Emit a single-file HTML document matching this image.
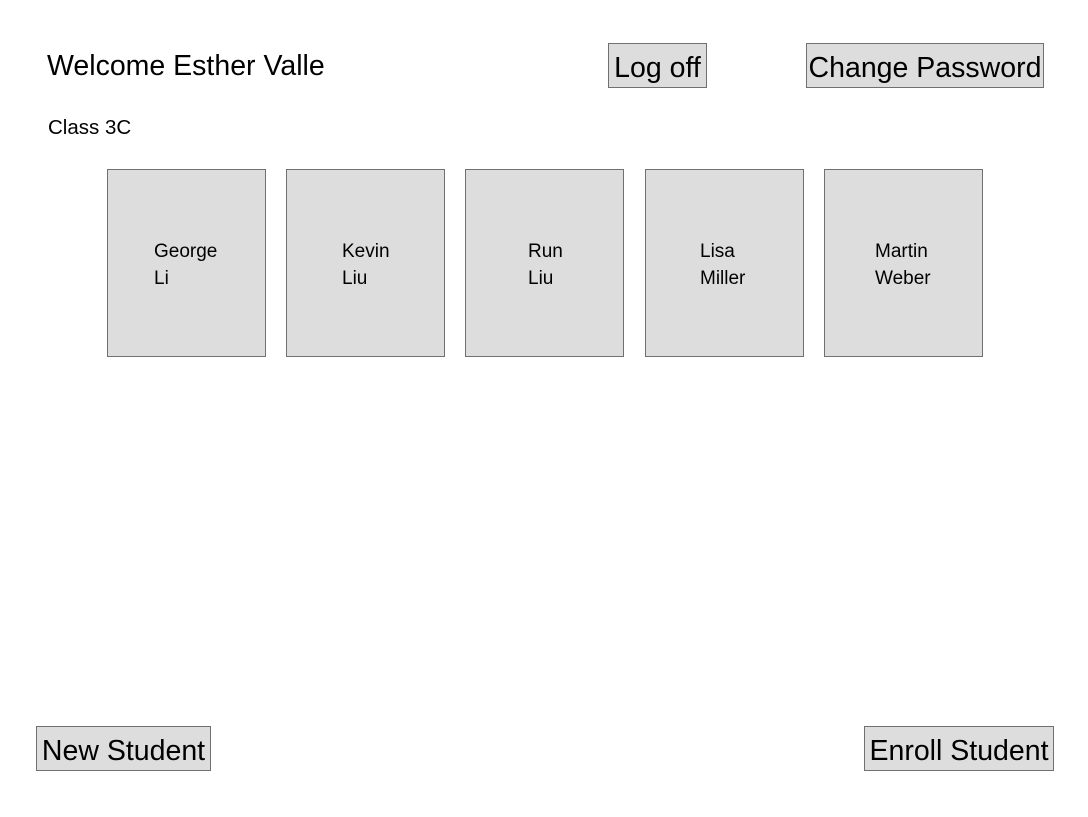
<!DOCTYPE html>
<html><head><style>
body{margin:0;width:1088px;height:817px;background:#fff;position:relative;font-family:"Liberation Sans",sans-serif;color:#000;overflow:hidden}
.a{position:absolute;white-space:nowrap}
.btn{position:absolute;box-sizing:border-box;background:#dddddd;border:1px solid #707070;display:flex;align-items:center;justify-content:center;font-size:28.5px;white-space:nowrap;padding-top:5px}
.card{position:absolute;top:169px;width:159px;height:188px;box-sizing:border-box;background:#dddddd;border:1px solid #707070;font-size:19px;line-height:27px}
.card div{position:absolute;top:68px}
</style></head><body>
<div class="a" style="left:47px;top:50px;font-size:28.5px">Welcome Esther Valle</div>
<div class="a" style="left:48px;top:116px;font-size:20.5px">Class 3C</div>
<div class="btn" style="left:608px;top:43px;width:99px;height:45px">Log off</div>
<div class="btn" style="left:806px;top:43px;width:238px;height:45px">Change Password</div>
<div class="card" style="left:107px"><div style="left:46px">George<br>Li</div></div>
<div class="card" style="left:286px"><div style="left:55px">Kevin<br>Liu</div></div>
<div class="card" style="left:465px"><div style="left:62px">Run<br>Liu</div></div>
<div class="card" style="left:645px"><div style="left:54px">Lisa<br>Miller</div></div>
<div class="card" style="left:824px"><div style="left:50px">Martin<br>Weber</div></div>
<div class="btn" style="left:36px;top:726px;width:175px;height:45px">New Student</div>
<div class="btn" style="left:864px;top:726px;width:190px;height:45px">Enroll Student</div>
</body></html>
